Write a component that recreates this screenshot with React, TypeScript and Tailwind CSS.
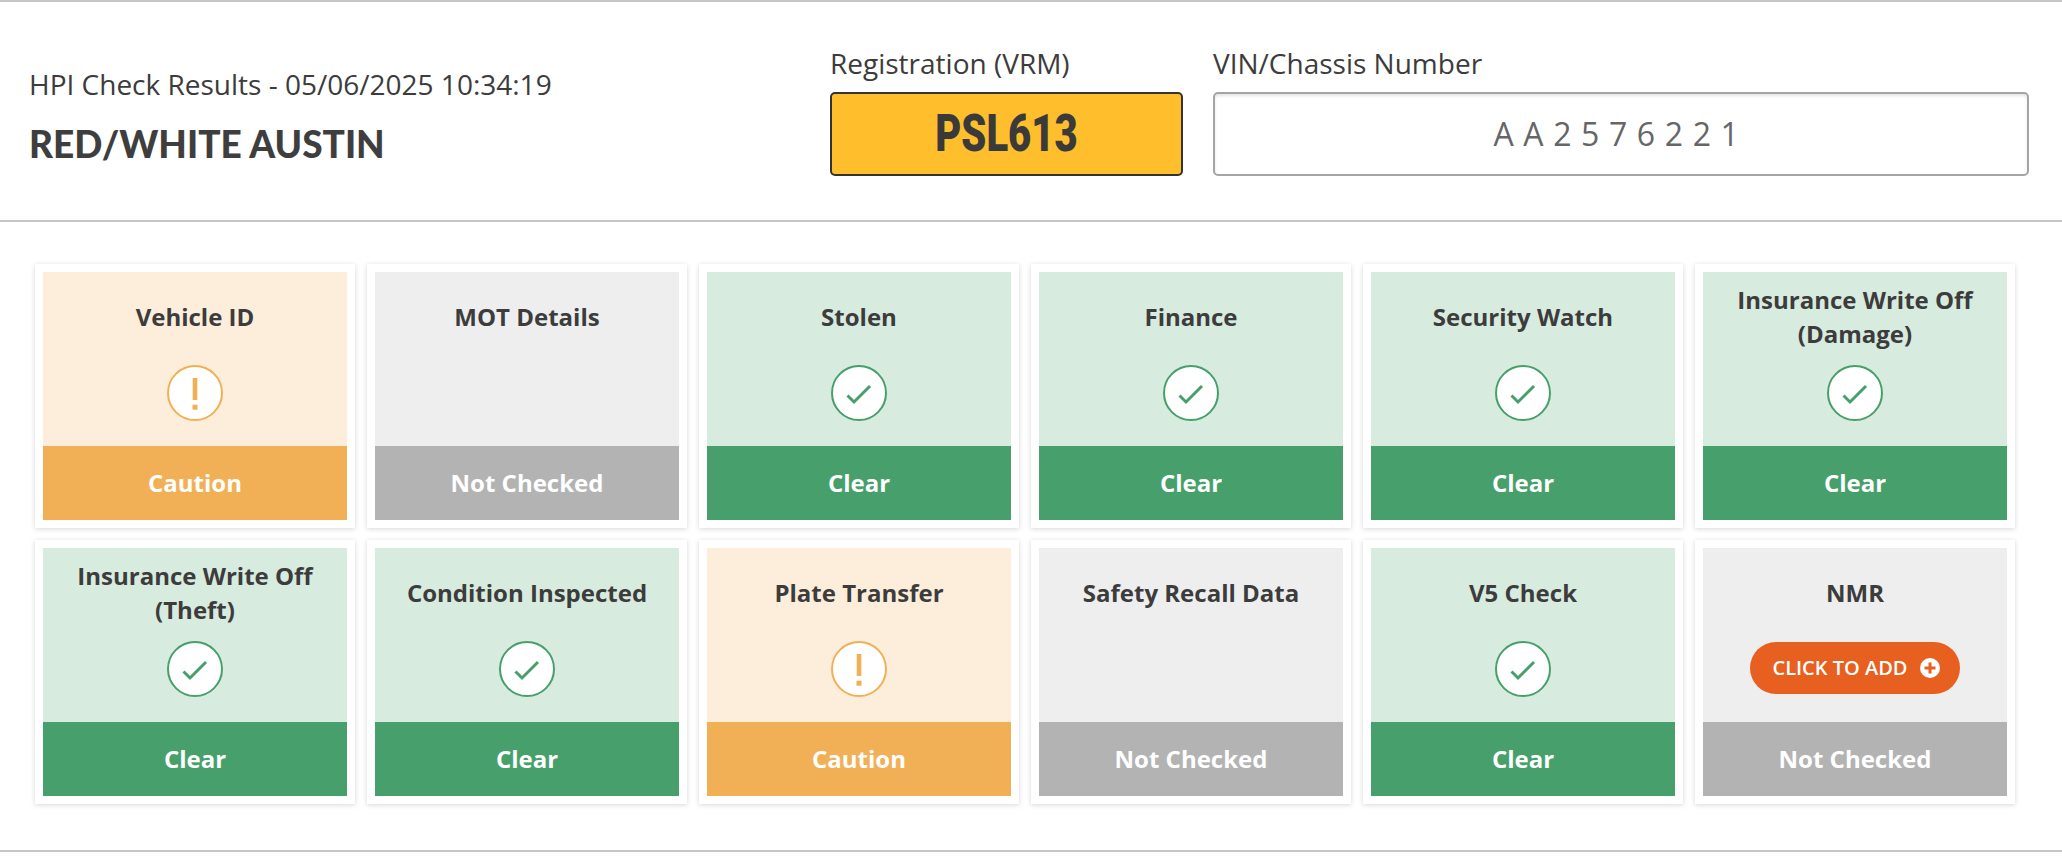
import React from "react";

type Kind = "caution" | "none" | "clear";
const cards: { title: string[]; kind: Kind; add?: boolean }[] = [
  { title: ["Vehicle ID"], kind: "caution" },
  { title: ["MOT Details"], kind: "none" },
  { title: ["Stolen"], kind: "clear" },
  { title: ["Finance"], kind: "clear" },
  { title: ["Security Watch"], kind: "clear" },
  { title: ["Insurance Write Off", "(Damage)"], kind: "clear" },
  { title: ["Insurance Write Off", "(Theft)"], kind: "clear" },
  { title: ["Condition Inspected"], kind: "clear" },
  { title: ["Plate Transfer"], kind: "caution" },
  { title: ["Safety Recall Data"], kind: "none" },
  { title: ["V5 Check"], kind: "clear" },
  { title: ["NMR"], kind: "none", add: true },
];

const styles = {
  caution: { bg: "bg-[#fdeedb]", band: "bg-[#f2b056]", label: "Caution" },
  none: { bg: "bg-[#eeeeee]", band: "bg-[#b3b3b3]", label: "Not Checked" },
  clear: { bg: "bg-[#d8ebdf]", band: "bg-[#479f6b]", label: "Clear" },
};

function Badge({ kind }: { kind: Kind }) {
  if (kind === "clear")
    return (
      <svg width="56" height="56" viewBox="0 0 56 56">
        <circle cx="28" cy="28" r="27" fill="#fff" stroke="#479f6b" strokeWidth="2" />
        <path d="M16.5 30.5 L23 37 L39 21" fill="none" stroke="#479f6b" strokeWidth="3" />
      </svg>
    );
  return (
    <svg width="56" height="56" viewBox="0 0 56 56">
      <circle cx="28" cy="28" r="27" fill="#fff" stroke="#f2b056" strokeWidth="2" />
      <rect x="25.7" y="13" width="4.6" height="22" fill="#f2b056" />
      <rect x="25.5" y="39.7" width="5" height="5" fill="#f2b056" />
    </svg>
  );
}

function Card({ title, kind, add }: { title: string[]; kind: Kind; add?: boolean }) {
  const s = styles[kind];
  return (
    <div className="bg-white p-2 shadow-[0_1px_5px_rgba(0,0,0,0.16)]">
      <div className={`flex h-[248px] flex-col ${s.bg}`}>
        <div className="flex h-[90px] flex-col items-center justify-center text-center text-[24px] leading-[34px] font-bold text-[#3c3c3c]">
          {title.map((t) => (
            <div key={t}>{t}</div>
          ))}
        </div>
        <div className={`flex h-[84px] items-start justify-center ${add ? "pt-[4px]" : "pt-[3px]"}`}>
          {add ? (
            <div className="flex h-[52px] w-[210px] items-center justify-center gap-[12px] rounded-full bg-[#e8601f] pl-[2px] text-[20px] font-semibold text-white">
              <span>CLICK TO ADD</span>
              <svg width="20" height="20" viewBox="0 0 20 20">
                <circle cx="10" cy="10" r="10" fill="#fff" />
                <path d="M10 4.5V15.5M4.5 10H15.5" stroke="#e8601f" strokeWidth="3" />
              </svg>
            </div>
          ) : kind !== "none" ? (
            <Badge kind={kind} />
          ) : null}
        </div>
        <div className={`flex h-[74px] items-center justify-center text-[24px] font-bold text-white ${s.band}`}>
          {s.label}
        </div>
      </div>
    </div>
  );
}

export default function App() {
  return (
    <div className="bg-white font-['Open_Sans',sans-serif] text-[#3c3c3c]">
      <div className="border-y-2 border-[#c6c6c6]">
        <div className="flex h-[218px] items-start">
          <div className="w-[800px] pt-[63px] pl-[29px]">
            <div className="text-[28px] leading-[38px] font-normal">HPI Check Results - 05/06/2025 10:34:19</div>
            <div className="mt-[19px] font-['Lato',sans-serif] text-[37px] leading-[44px] font-black text-[#3e3e3e]">
              RED/WHITE AUSTIN
            </div>
          </div>
          <div className="flex pt-[42px] pl-[30px]">
            <div className="w-[353px]">
              <div className="h-[48px] text-[28px] leading-[38px]">Registration (VRM)</div>
              <div className="flex h-[84px] items-center justify-center overflow-hidden rounded-[5px] border-2 border-[#333333] bg-[#ffbe2b]">
                <span className="scale-x-[0.77] font-['Roboto',sans-serif] text-[52px] leading-none font-black text-[#3a3a3a]">
                  PSL613
                </span>
              </div>
            </div>
            <div className="ml-[30px] w-[816px]">
              <div className="h-[48px] text-[28px] leading-[38px]">VIN/Chassis Number</div>
              <div className="flex h-[84px] items-center justify-center rounded-[5px] border-2 border-[#a5a5a5] bg-white text-[32px] tracking-[0.3em] text-[#666666] shadow-[inset_0_2px_3px_rgba(0,0,0,0.1)]">
                AA2576221
              </div>
            </div>
          </div>
        </div>
      </div>
      <div className="border-b-2 border-[#c6c6c6] pt-[42px] pb-[46px] pl-[35px]">
        <div className="grid w-[1980px] grid-cols-[repeat(6,320px)] gap-3">
          {cards.map((c) => (
            <Card key={c.title.join(" ")} {...c} />
          ))}
        </div>
      </div>
    </div>
  );
}
